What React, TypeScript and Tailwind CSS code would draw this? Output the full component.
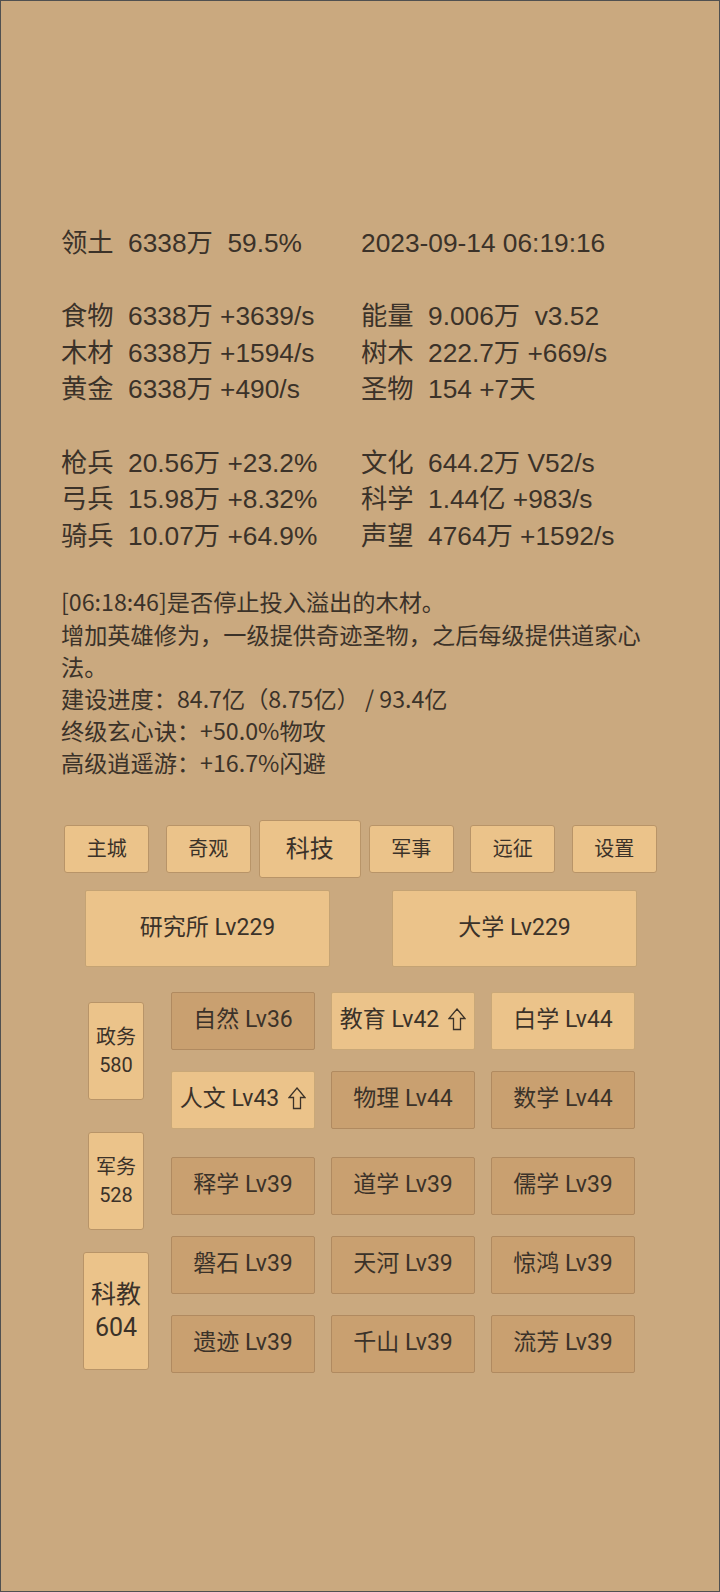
import React from "react";

type Stat = { label: string; value: string };

const leftStats: (Stat | null)[] = [
  { label: "领土", value: "6338万  59.5%" },
  null,
  { label: "食物", value: "6338万 +3639/s" },
  { label: "木材", value: "6338万 +1594/s" },
  { label: "黄金", value: "6338万 +490/s" },
  null,
  { label: "枪兵", value: "20.56万 +23.2%" },
  { label: "弓兵", value: "15.98万 +8.32%" },
  { label: "骑兵", value: "10.07万 +64.9%" },
];

const rightStats: (Stat | null)[] = [
  { label: "", value: "2023-09-14 06:19:16" },
  null,
  { label: "能量", value: "9.006万  v3.52" },
  { label: "树木", value: "222.7万 +669/s" },
  { label: "圣物", value: "154 +7天" },
  null,
  { label: "文化", value: "644.2万 V52/s" },
  { label: "科学", value: "1.44亿 +983/s" },
  { label: "声望", value: "4764万 +1592/s" },
];

const logLines = [
  "[06:18:46]是否停止投入溢出的木材。",
  "增加英雄修为，一级提供奇迹圣物，之后每级提供道家心法。",
  "建设进度：84.7亿（8.75亿） / 93.4亿",
  "终级玄心诀：+50.0%物攻",
  "高级逍遥游：+16.7%闪避",
];

const tabs = ["主城", "奇观", "科技", "军事", "远征", "设置"];

type Tech = { name: string; up?: boolean; light?: boolean };

const techRows: Tech[][] = [
  [{ name: "自然 Lv36" }, { name: "教育 Lv42", up: true, light: true }, { name: "白学 Lv44", light: true }],
  [{ name: "人文 Lv43", up: true, light: true }, { name: "物理 Lv44" }, { name: "数学 Lv44" }],
  [{ name: "释学 Lv39" }, { name: "道学 Lv39" }, { name: "儒学 Lv39" }],
  [{ name: "磐石 Lv39" }, { name: "天河 Lv39" }, { name: "惊鸿 Lv39" }],
  [{ name: "遗迹 Lv39" }, { name: "千山 Lv39" }, { name: "流芳 Lv39" }],
];

function StatColumn({ rows }: { rows: (Stat | null)[] }) {
  return (
    <div className="w-[300px]">
      {rows.map((r, i) =>
        r ? (
          <div key={i} className="flex whitespace-pre">
            {r.label && <span className="w-[67px] shrink-0">{r.label}</span>}
            <span>{r.value}</span>
          </div>
        ) : (
          <div key={i} className="h-[36.6px]" />
        )
      )}
    </div>
  );
}

function UpArrow() {
  return (
    <svg width="18" height="23" viewBox="0 0 18 23" className="ml-[9px] mt-[-2px]">
      <path
        d="M9 1 L17 10.5 L12.5 10.5 L12.5 21.5 L5.5 21.5 L5.5 10.5 L1 10.5 Z"
        fill="none"
        stroke="#3b3229"
        strokeWidth="1.3"
        strokeLinejoin="miter"
      />
    </svg>
  );
}

function TechButton({ t }: { t: Tech }) {
  return (
    <div
      className={`w-[144px] h-[58px] flex items-center justify-center whitespace-nowrap rounded-[2px] border text-[23px] ${
        t.light ? "bg-[#ebc38a] border-[#c9a878]" : "bg-[#c9a070] border-[#b08a60]"
      }`}
    >
      {t.name}
      {t.up && <UpArrow />}
    </div>
  );
}

export default function App() {
  return (
    <div
      className="h-[1592px] w-full overflow-hidden border border-[#505050] bg-[#caa97f] text-[#3b3229]"
      style={{ fontFamily: 'Roboto, "Noto Sans CJK SC", sans-serif' }}
    >
      {/* stats */}
      <div
        className="ml-[60px] mt-[224px] flex text-[26.3px] leading-[36.6px]"
        style={{ fontFamily: '"Liberation Sans", "Noto Sans CJK SC", sans-serif' }}
      >
        <StatColumn rows={leftStats} />
        <StatColumn rows={rightStats} />
      </div>

      {/* log */}
      <div
        className="ml-[60px] mt-[31px] w-[598px] text-[23.2px] leading-[32.2px]"
        style={{ fontFamily: '"Noto Sans CJK SC", sans-serif' }}
      >
        {logLines.map((l, i) => (
          <div key={i}>{l}</div>
        ))}
      </div>

      {/* tabs */}
      <div className="ml-[55px] mt-[41px] grid w-[609px] grid-cols-6 items-center">
        {tabs.map((t) => {
          const active = t === "科技";
          return (
            <div key={t} className="flex justify-center">
              <div
                className={`flex items-center justify-center rounded-[3px] border border-[#b89468] bg-[#ebc38a] ${
                  active ? "h-[58px] w-[102px] text-[24px]" : "h-[48px] w-[85px] text-[20px]"
                }`}
              >
                {t}
              </div>
            </div>
          );
        })}
      </div>

      {/* buildings */}
      <div className="ml-[84px] mt-[12px] flex gap-[62px] text-[23px]">
        <div className="flex h-[77px] w-[245px] items-center justify-center rounded-[2px] border border-[#c4a374] bg-[#ebc38a]">
          研究所 Lv229
        </div>
        <div className="flex h-[77px] w-[245px] items-center justify-center rounded-[2px] border border-[#c4a374] bg-[#ebc38a]">
          大学 Lv229
        </div>
      </div>

      {/* tech tree */}
      <div className="ml-[82px] mt-[25px] flex">
        <div className="flex w-[66px] flex-col items-center">
          <div className="mt-[10px] flex h-[98px] w-[56px] flex-col items-center justify-center rounded-[3px] border border-[#b89468] bg-[#ebc38a] text-[20px] leading-[28px]">
            <span>政务</span>
            <span>580</span>
          </div>
          <div className="mt-[32px] flex h-[98px] w-[56px] flex-col items-center justify-center rounded-[3px] border border-[#b89468] bg-[#ebc38a] text-[20px] leading-[28px]">
            <span>军务</span>
            <span>528</span>
          </div>
          <div className="mt-[22px] flex h-[118px] w-[66px] flex-col items-center justify-center rounded-[3px] border border-[#b89468] bg-[#ebc38a] text-[25px] leading-[33px]">
            <span>科教</span>
            <span>604</span>
          </div>
        </div>
        <div className="ml-[22px] flex flex-col">
          {techRows.map((row, i) => (
            <div key={i} className={`flex gap-[16px] ${i === 0 ? "" : i === 2 ? "mt-[28px]" : "mt-[21px]"}`}>
              {row.map((t) => (
                <TechButton key={t.name} t={t} />
              ))}
            </div>
          ))}
        </div>
      </div>
    </div>
  );
}
